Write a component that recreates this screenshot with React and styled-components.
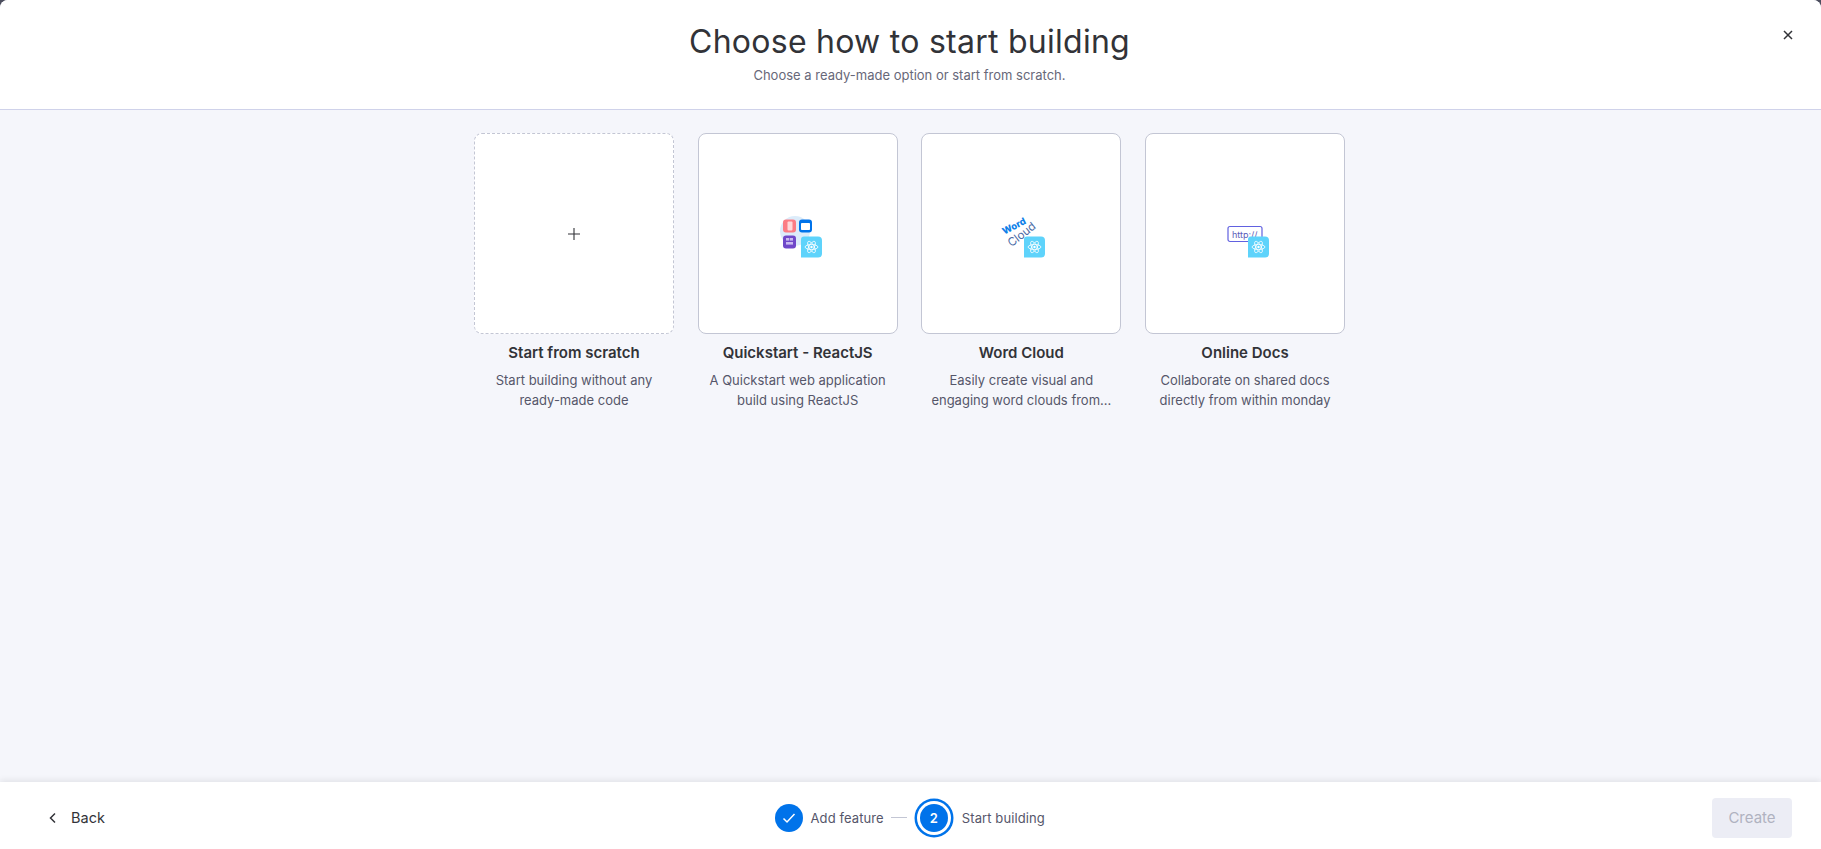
import React from 'react'
import styled, { createGlobalStyle } from 'styled-components'

const bodyFont = `Inter, "Noto Sans", "Liberation Sans", sans-serif`

const GlobalStyle = createGlobalStyle`
html, body {
  margin: 0;
  padding: 0;
  height: 100%;
  background: #4c4e5e;
}
#root {
  height: 100%;
}
`

// react atom on the blue tile, every card icon has it
const ReactTile = () => (
  <g transform="translate(27 26.5)">
    <path d="M3 0h14a4 4 0 0 1 4 4v13a4 4 0 0 1-4 4H0V3a3 3 0 0 1 3-3z" fill="#5ed3fb" />
    <g fill="none" stroke="#fff" strokeWidth="0.8" transform="translate(10.5 10.5)">
      <ellipse rx="6.4" ry="2.5" />
      <ellipse rx="6.4" ry="2.5" transform="rotate(60)" />
      <ellipse rx="6.4" ry="2.5" transform="rotate(120)" />
    </g>
    <circle cx="10.5" cy="10.5" r="1.2" fill="#fff" />
  </g>
)

const QuickstartIcon = () => (
  <svg width="48" height="48" viewBox="0 0 48 48">
    <circle cx="21" cy="21" r="15" fill="#dcecfa" />
    <rect x="9" y="9.5" width="13" height="13" rx="3" fill="#fb7c84" />
    <rect x="13.5" y="11.5" width="5" height="9" rx="1" fill="#fff" opacity="0.7" />
    <rect x="25" y="9.5" width="13" height="13" rx="3" fill="#0073ea" />
    <rect x="27" y="13" width="9" height="7" rx="0.8" fill="#fff" />
    <rect x="9" y="25.5" width="13" height="13" rx="3" fill="#6f48c9" />
    <rect x="12" y="28" width="3.2" height="2.6" fill="#c9baf0" />
    <rect x="15.8" y="28" width="3.2" height="2.6" fill="#c9baf0" />
    <rect x="12" y="32" width="7" height="2.6" fill="#c9baf0" />
    <ReactTile />
  </svg>
)

const CloudIcon = () => (
  <svg width="48" height="48" viewBox="0 0 48 48">
    <text x="18.5" y="19" textAnchor="middle" transform="rotate(-27 18.5 19)" fontFamily={bodyFont} fontSize="9.5" fontWeight="800" fill="#0d7fe8">
      Word
    </text>
    <text x="27" y="27.5" textAnchor="middle" transform="rotate(-38 27 27.5)" fontFamily={bodyFont} fontSize="11.5" fill="#4a6aa5">
      Cloud
    </text>
    <ReactTile />
  </svg>
)

const DocsIcon = () => (
  <svg width="48" height="48" viewBox="0 0 48 48">
    <rect x="7" y="16.5" width="34" height="15" rx="2" fill="#fff" stroke="#6161e0" strokeWidth="1.2" />
    <text x="11" y="27.5" fontFamily={bodyFont} fontSize="9" fill="#5b5bb8">
      http://
    </text>
    <ReactTile />
  </svg>
)

const PlusIcon = () => (
  <svg width="14" height="14" viewBox="0 0 14 14">
    <path d="M7 1v12M1 7h12" stroke="#323338" strokeWidth="1.1" fill="none" />
  </svg>
)

const options = [
  { title: 'Start from scratch', lines: ['Start building without any', 'ready-made code'], icon: <PlusIcon />, dashed: true },
  { title: 'Quickstart - ReactJS', lines: ['A Quickstart web application', 'build using ReactJS'], icon: <QuickstartIcon /> },
  { title: 'Word Cloud', lines: ['Easily create visual and', 'engaging word clouds from...'], icon: <CloudIcon /> },
  { title: 'Online Docs', lines: ['Collaborate on shared docs', 'directly from within monday'], icon: <DocsIcon /> },
]

const App = () => {
  return (
    <>
      <GlobalStyle />
      <Modal>
        <Header>
          <Title>Choose how to start building</Title>
          <Subtitle>Choose a ready-made option or start from scratch.</Subtitle>
          <CloseButton aria-label="close">
            <svg width="10" height="10" viewBox="0 0 10 10">
              <path d="M1 1l8 8M9 1l-8 8" stroke="#323338" strokeWidth="1.5" />
            </svg>
          </CloseButton>
        </Header>
        <Content>
          <Cards>
            {options.map((option) => (
              <Option key={option.title}>
                <Card $dashed={option.dashed}>{option.icon}</Card>
                <OptionTitle>{option.title}</OptionTitle>
                <OptionText>
                  {option.lines.map((line) => (
                    <div key={line}>{line}</div>
                  ))}
                </OptionText>
              </Option>
            ))}
          </Cards>
        </Content>
        <Footer>
          <BackButton>
            <svg width="10" height="12" viewBox="0 0 10 12">
              <path d="M7 1.5L2.5 6L7 10.5" stroke="#323338" strokeWidth="1.5" fill="none" />
            </svg>
            <span>Back</span>
          </BackButton>
          <Stepper>
            <StepDone>
              <svg width="14" height="12" viewBox="0 0 14 12">
                <path d="M1.5 6.5L5 10L12.5 2" stroke="#fff" strokeWidth="1.5" fill="none" />
              </svg>
            </StepDone>
            <StepLabel>Add feature</StepLabel>
            <StepLine />
            <StepCurrent>2</StepCurrent>
            <StepLabel>Start building</StepLabel>
          </Stepper>
          <CreateButton disabled>Create</CreateButton>
        </Footer>
      </Modal>
    </>
  )
}

const Modal = styled.div`
width: 100%;
height: 849px;
display: flex;
flex-direction: column;
background: #f5f6fb;
border-radius: 8px 8px 0 0;
overflow: hidden;
font-family: ${bodyFont};
color: #323338;
`

const Header = styled.header`
position: relative;
height: 110px;
flex-shrink: 0;
box-sizing: border-box;
padding: 21px 2px 0 0;
display: flex;
flex-direction: column;
align-items: center;
background: #fff;
border-bottom: 1px solid #cfd2ea;
`

const Title = styled.h1`
margin: 0;
font-size: 32px;
line-height: 42px;
font-weight: 400;
letter-spacing: 0.26px;
color: #323338;
`

const Subtitle = styled.p`
margin: 2px 0 0;
font-size: 13px;
line-height: 20px;
color: #676879;
`

const CloseButton = styled.button`
position: absolute;
top: 25px;
right: 23px;
width: 20px;
height: 20px;
padding: 0;
display: flex;
align-items: center;
justify-content: center;
border: none;
background: none;
`

const Content = styled.main`
flex: 1;
padding-top: 23px;
display: flex;
justify-content: center;
`

const Cards = styled.div`
display: flex;
gap: 23.7px;
margin-left: -2px;
`

const Option = styled.div`
width: 200px;
display: flex;
flex-direction: column;
align-items: center;
text-align: center;
`

const Card = styled.div`
width: 200px;
height: 201px;
box-sizing: border-box;
display: flex;
align-items: center;
justify-content: center;
background: #fff;
border-radius: 8px;
border: 1px ${(p) => (p.$dashed ? 'dashed #c3c6d4' : 'solid #c3c6d4')};
`

const OptionTitle = styled.div`
margin-top: 7px;
font-size: 15px;
line-height: 24px;
font-weight: 600;
color: #323338;
`

const OptionText = styled.div`
margin-top: 5px;
font-size: 13px;
line-height: 20px;
color: #55566a;
white-space: nowrap;
`

const Footer = styled.footer`
height: 67px;
flex-shrink: 0;
box-sizing: border-box;
padding: 4px 29px 0 48px;
display: flex;
align-items: center;
justify-content: space-between;
background: #fff;
box-shadow: 0 -2px 6px rgba(0, 0, 0, 0.08);
`

const BackButton = styled.button`
display: flex;
align-items: center;
gap: 13px;
padding: 0;
border: none;
background: none;
font: inherit;
font-size: 14.5px;
color: #323338;
`

const Stepper = styled.div`
display: flex;
align-items: center;
margin-left: 2.5px;
`

const StepDone = styled.div`
width: 28px;
height: 28px;
display: flex;
align-items: center;
justify-content: center;
border-radius: 50%;
background: #0073ea;
`

const StepCurrent = styled.div`
width: 28px;
height: 28px;
margin: 0 6px 0 7px;
display: flex;
align-items: center;
justify-content: center;
border-radius: 50%;
background: #0073ea;
box-shadow: 0 0 0 3px #fff, 0 0 0 5.5px #0073ea;
color: #fff;
font-size: 13px;
font-weight: 600;
`

const StepLabel = styled.span`
margin-left: 8px;
font-size: 13px;
letter-spacing: 0.1px;
color: #55566a;
`

const StepLine = styled.div`
width: 16px;
height: 1px;
margin: 0 6px 0 7px;
background: #c3c6d4;
`

const CreateButton = styled.button`
width: 80px;
height: 40px;
border: none;
border-radius: 4px;
background: #ecedf5;
color: #b0b2c0;
font: inherit;
font-size: 15px;
`

export default App
